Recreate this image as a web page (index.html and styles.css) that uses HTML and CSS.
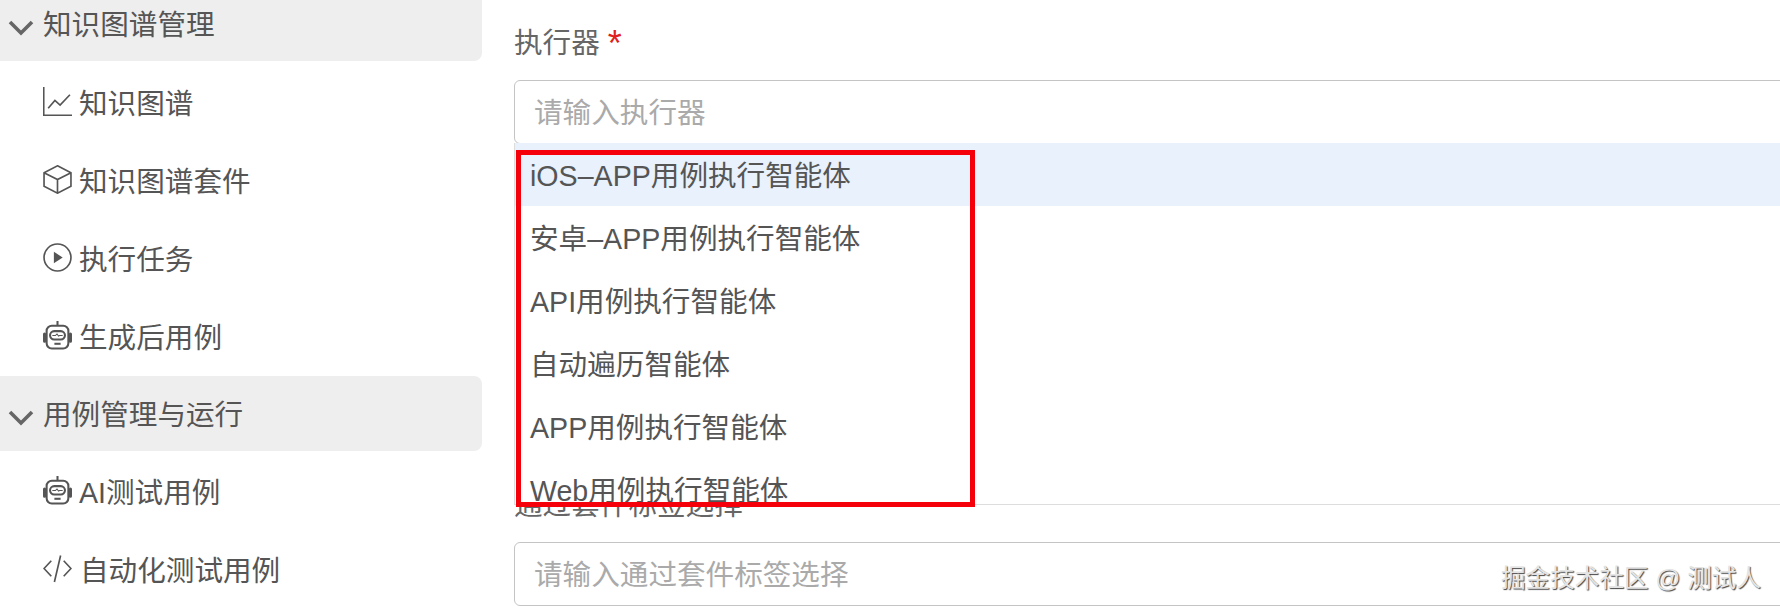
FILE: index.html
```html
<!DOCTYPE html>
<html lang="zh-CN">
<head>
<meta charset="utf-8">
<title>执行器</title>
<link rel="stylesheet" href="styles.css">
</head>
<body>
<div class="page">
  <nav class="sidebar">
    <div class="group">
      <svg class="chevron" viewBox="0 0 26 16"><path d="M2 2l11 11L24 2"/></svg>
      <span>知识图谱管理</span>
    </div>
    <ul class="items">
      <li class="item">
        <svg class="icon" viewBox="0 0 28 28"><path d="M.7 0v27.3H28M5 20.5l6.5-7.5 5 4.5L26 7.5"/></svg>
        <span>知识图谱</span>
      </li>
      <li class="item">
        <svg class="icon" viewBox="0 0 28 28"><path d="M14 .8l13 6.6v13.2l-13 6.6-13-6.6V7.4zM1 7.4l13 6.6 13-6.6M14 14v13.2"/></svg>
        <span>知识图谱套件</span>
      </li>
      <li class="item">
        <svg class="icon" viewBox="0 0 28 28"><circle cx="14" cy="14" r="13"/><path class="solid" d="M10.5 8.5l8.5 5.5-8.5 5.5z"/></svg>
        <span>执行任务</span>
      </li>
      <li class="item">
        <svg class="icon robot" viewBox="0 0 28 28"><path d="M14 0v4"/><rect x="3.5" y="4.5" width="21" height="22" rx="5"/><path class="thick" d="M1.5 12.5v7M26.5 12.5v7"/><rect x="6.8" y="9.8" width="14.4" height="8" rx="4"/><path class="pulse" d="M9 14h3l1.5-1.5 1.5 2 1-.5h3"/><path d="M11 22h6"/></svg>
        <span>生成后用例</span>
      </li>
    </ul>
    <div class="group">
      <svg class="chevron" viewBox="0 0 26 16"><path d="M2 2l11 11L24 2"/></svg>
      <span>用例管理与运行</span>
    </div>
    <ul class="items items-tail">
      <li class="item">
        <svg class="icon robot" viewBox="0 0 28 28"><path d="M14 0v4"/><rect x="3.5" y="4.5" width="21" height="22" rx="5"/><path class="thick" d="M1.5 12.5v7M26.5 12.5v7"/><rect x="6.8" y="9.8" width="14.4" height="8" rx="4"/><path class="pulse" d="M9 14h3l1.5-1.5 1.5 2 1-.5h3"/><path d="M11 22h6"/></svg>
        <span>AI测试用例</span>
      </li>
      <li class="item">
        <svg class="icon" viewBox="0 0 28 28"><path d="M8 6.5L1 14l7 7.5M20 6.5l7 7.5-7 7.5M17 1.5L11 27"/></svg>
        <span class="text-shift">自动化测试用例</span>
      </li>
    </ul>
  </nav>

  <main class="main">
    <section class="field field-open">
      <div class="label">执行器 <em class="required">*</em></div>
      <div class="input"><span class="placeholder">请输入执行器</span></div>
      <ul class="dropdown">
        <li class="option option-active">iOS–APP用例执行智能体</li>
        <li class="option">安卓–APP用例执行智能体</li>
        <li class="option">API用例执行智能体</li>
        <li class="option">自动遍历智能体</li>
        <li class="option">APP用例执行智能体</li>
        <li class="option">Web用例执行智能体</li>
      </ul>
      <div class="highlight"></div>
    </section>
    <section class="field field-second">
      <div class="label">通过套件标签选择</div>
      <div class="input"><span class="placeholder">请输入通过套件标签选择</span></div>
    </section>
  </main>
</div>
<div class="watermark">掘金技术社区 @ 测试人</div>
</body>
</html>
```

FILE: styles.css
```css
* {
  box-sizing: border-box;
}

html,
body {
  margin: 0;
  height: 612px;
  overflow: hidden;
  background: #fff;
}

body {
  position: relative;
  font-family: "Liberation Sans", "Noto Sans CJK SC", sans-serif;
  font-size: 28.6px;
  color: #555;
}

ul {
  list-style: none;
  margin: 0;
  padding: 0;
}

.page {
  display: flex;
  height: 612px;
}

.sidebar {
  flex: none;
  width: 482px;
  margin-top: -14px;
}

.group {
  display: flex;
  align-items: center;
  gap: 9px;
  height: 75px;
  padding: 0 0 3px 8px;
  background: #eee;
  border-radius: 0 8px 8px 0;
}

.chevron {
  width: 26px;
  height: 16px;
  margin-top: 12px;
  fill: none;
  stroke: #666;
  stroke-width: 3.6;
}

.items {
  padding-top: 3px;
}

.items-tail {
  padding-top: 2px;
}

.item {
  display: flex;
  align-items: center;
  gap: 7px;
  height: 78px;
  padding: 0 0 4px 43px;
}

.icon {
  flex: none;
  width: 29px;
  height: 29px;
  fill: none;
  stroke: #555;
  stroke-width: 1.6;
}

.icon .solid {
  fill: #555;
  stroke: none;
}

.robot {
  stroke-width: 2;
}

.robot .thick {
  stroke-width: 3;
  stroke-linecap: round;
}

.robot .pulse {
  stroke-width: 1;
}

.text-shift {
  margin-left: 1px;
}

.main {
  flex: 1;
  min-width: 0;
  margin-right: -20px;
  padding: 25px 0 0 32px;
}

.field {
  position: relative;
}

.field-open {
  z-index: 1;
}

.field-second {
  margin-top: 343px;
}

.label {
  height: 36px;
  line-height: 36px;
  margin-bottom: 19px;
  color: #666;
}

.required {
  font-style: normal;
  font-size: 36px;
  line-height: 0;
  vertical-align: -3px;
  color: #e02020;
}

.input {
  display: flex;
  align-items: center;
  height: 64px;
  padding: 0 0 4px 19px;
  border: 1px solid #c4c4c4;
  border-radius: 6px;
  background: #fff;
}

.placeholder {
  color: #aaa;
}

.dropdown {
  position: absolute;
  top: 118px;
  left: 0;
  right: 0;
  height: 362px;
  overflow: hidden;
  background: #fff;
  border-left: 1px solid #ddd;
  border-bottom: 1px solid #ddd;
}

.option {
  display: flex;
  align-items: center;
  height: 63px;
  padding: 0 0 3px 15px;
}

.option-active {
  background: #e8f1fc;
}

.highlight {
  position: absolute;
  top: 125px;
  left: 2px;
  width: 459px;
  height: 357px;
  border: 5px solid #f5000a;
}

.watermark {
  position: absolute;
  right: 19px;
  top: 563px;
  font-size: 24.6px;
  line-height: 32px;
  color: #e4e4e4;
  text-shadow: 1px 1px 1px #444;
}
```
